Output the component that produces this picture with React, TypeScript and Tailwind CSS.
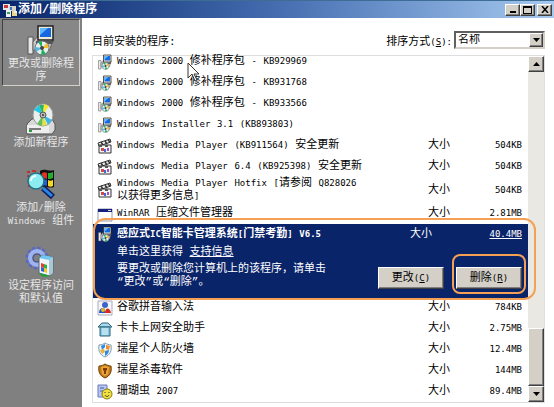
import type { ReactNode } from "react";

const base = "font-['Liberation_Mono','Noto_Sans_CJK_SC',monospace]";
const latin = "font-['DejaVu_Sans_Mono',monospace] text-[9px]";

/* Latin runs are set smaller than the Chinese text so both stay optically even. */
function Mixed({ children }: { children: string }) {
  return (
    <>
      {children.split(/([!-~]+)/).map((part, i) =>
        i % 2 ? (
          <span key={i} className={latin}>{part}</span>
        ) : (
          part
        ),
      )}
    </>
  );
}

function InstallerIcon({ className = "size-4" }: { className?: string }) {
  return (
    <svg viewBox="0 0 32 32" className={`shrink-0 ${className}`} aria-hidden="true">
      <path d="M3 13h5v17H3z" fill="#e8e8e8" stroke="#555" />
      <path d="M8 18l4-5h16l-3 13H8z" fill="#c8c8c8" stroke="#666" />
      <path d="M13 2h15v14H13z" fill="#ece9d8" stroke="#222" strokeWidth="1.5" />
      <path d="M15 4h11v9H15z" fill="#1668e0" />
      <path d="M15 4h8l-8 7z" fill="#62b8ff" />
      <path d="M11 17h18l-2 3H11z" fill="#555" />
      <circle cx="17" cy="24" r="7" fill="#e4efe9" stroke="#667" />
      <path d="M17 24l-4-6 4-1zM17 24l4 6-5 1z" fill="#20b060" />
      <path d="M17 24l5-5 2 5z" fill="#f0c030" />
      <path d="M17 24l-6 4-1-5z" fill="#55b8e8" />
      <circle cx="17" cy="24" r="2" fill="#444" />
    </svg>
  );
}

function TitleIcon() {
  return (
    <svg viewBox="0 0 16 16" className="size-4 shrink-0" aria-hidden="true">
      <path d="M1 2h7v6H1z" fill="#e8e8e8" />
      <path d="M2 3h4v3H2z" fill="#c83838" />
      <path d="M7 4h7v5H7z" fill="#d8d4c8" />
      <path d="M8 5h2v3H8z" fill="#3878d0" />
      <path d="M4 8h5v7H4z" fill="#eee" />
      <path d="M10 9h5v5h-5z" fill="#e8d890" />
      <path d="M5 10h3v2H5z" fill="#39a060" />
      <path d="M12 9h3v2h-3z" fill="#eee" />
    </svg>
  );
}

function DiscIcon() {
  return (
    <svg viewBox="0 0 32 32" className="size-8" aria-hidden="true">
      <path d="M2 21l5-5h20l3 5v6l-3 4H2z" fill="#d9d9d9" stroke="#555" />
      <path d="M2 22h22v8H2z" fill="#eee" />
      <path d="M4 26h12" stroke="#555" strokeWidth="1.5" />
      <path d="M4 28h3" stroke="#22a040" strokeWidth="2" />
      <ellipse cx="18" cy="12" rx="10" ry="11" fill="#e9eeee" stroke="#999" />
      <path d="M18 12L9 7l5-5z" fill="#20c8e8" />
      <path d="M18 12l-4-10h5z" fill="#30b060" />
      <path d="M18 12l1-11 5 2z" fill="#f6e830" />
      <path d="M18 12l9 5-4 5z" fill="#38b8e8" />
      <path d="M18 12l4 10-5 1z" fill="#e8e040" />
      <path d="M18 12l-1 11-5-2z" fill="#60c060" />
      <circle cx="18" cy="12" r="3" fill="#bbb" stroke="#555" />
      <circle cx="18" cy="12" r="1" fill="#333" />
    </svg>
  );
}

function ComponentsIcon() {
  return (
    <svg viewBox="0 0 32 32" className="size-8" aria-hidden="true">
      <path d="M15 3c5-3 9 1 14-1v17c-5 2-9-2-14 1z" fill="#111" />
      <path d="M17 5c2-1 3-1 5 0v6c-2-1-3-1-5 0z" fill="#e83020" />
      <path d="M23 5c2 0 3 0 5-1v6c-2 1-3 1-5 1z" fill="#20b030" />
      <path d="M17 12c2-1 3-1 5 0v6c-2-1-3-1-5 0z" fill="#2060e0" />
      <path d="M23 12c2 1 3 1 5 0v6c-2 1-3 1-5 0z" fill="#f8d820" />
      <path d="M2 4h3M7 3h4M2 8h2M3 12h1M3 18h3" stroke="#c03030" strokeWidth="2" />
      <path d="M18 20l10 9" stroke="#102060" strokeWidth="6" />
      <path d="M18 20l9 8" stroke="#2888e8" strokeWidth="3" />
      <circle cx="11" cy="13" r="8" fill="#8cecf0" stroke="#267080" strokeWidth="1.5" />
      <path d="M6 13c0-3 2-5 5-5" stroke="#e8ffff" strokeWidth="2" fill="none" />
    </svg>
  );
}

function DefaultsIcon() {
  return (
    <svg viewBox="0 0 32 32" className="size-8" aria-hidden="true">
      <circle cx="12" cy="12" r="9" fill="none" stroke="#5a68c0" strokeWidth="5" strokeDasharray="3 1.7" />
      <circle cx="12" cy="12" r="7" fill="none" stroke="#9db4f4" strokeWidth="4" />
      <circle cx="12" cy="12" r="4" fill="#808080" stroke="#4450a0" />
      <path d="M14 12l4-3 10 2v16l-4 3-10-3z" fill="#eef4f8" stroke="#567" />
      <path d="M24 14l4-3v16l-4 3z" fill="#a8c8d8" />
      <path d="M14 12l4-3 10 2-4 3z" fill="#70c8f0" />
      <path d="M16 17l3 1v4l-3-1z" fill="#e84030" />
      <path d="M19 18l3 1v4l-3-1z" fill="#30b040" />
      <path d="M16 21l3 1v4l-3-1z" fill="#3060e0" />
      <path d="M19 22l3 1v4l-3-1z" fill="#f0c820" />
      <path d="M13 27l5 4 8-1-3-1z" fill="#22a038" />
    </svg>
  );
}

function MediaIcon() {
  return (
    <svg viewBox="0 0 16 16" className="size-4 shrink-0" aria-hidden="true">
      <path d="M1 5l12-4 1 3L2 8z" fill="#eee" stroke="#333" />
      <path d="M4 4l2 3M8 3l2 3M11 2l2 2" stroke="#333" strokeWidth="1.5" />
      <path d="M2 7h12v8H2z" fill="#f6f6f6" stroke="#333" />
      <path d="M2 7h3v2H2zM8 7h3v2H8z" fill="#555" />
      <path d="M4 10h3v3H4z" fill="#d04850" />
      <path d="M7 11h2v3H7z" fill="#4068d8" />
      <path d="M10 10h2v3h-2z" fill="#a050c0" />
    </svg>
  );
}

function WindowIcon() {
  return (
    <svg viewBox="0 0 16 16" className="size-4 shrink-0" aria-hidden="true">
      <path d="M1 3h14v12H1z" fill="#fff" stroke="#99a" />
      <path d="M1 3h14v3H1z" fill="#15217c" />
      <path d="M11 4h3v1h-3z" fill="#ddd" />
    </svg>
  );
}

function GoogleIcon() {
  return (
    <svg viewBox="0 0 16 16" className="size-4 shrink-0" aria-hidden="true">
      <path d="M1 1h14v14H1z" fill="#f4f6fa" stroke="#aab" />
      <circle cx="8" cy="5" r="3" fill="#3c64c8" />
      <path d="M2 13c0-5 4-6 6-4v4z" fill="#2454c8" />
      <circle cx="6" cy="10" r="2" fill="#e8b820" />
      <path d="M8 13c0-6 5-6 6 0z" fill="#d82820" />
    </svg>
  );
}

function BinIcon() {
  return (
    <svg viewBox="0 0 16 16" className="size-4 shrink-0" aria-hidden="true">
      <path d="M1 6l4-4h6l4 4z" fill="#a8dcec" stroke="#28637c" />
      <path d="M3 6h10v9H3z" fill="#8cc8e0" stroke="#28637c" />
      <path d="M6 7v7M8 7v7M10 7v7" stroke="#e4f8ff" />
    </svg>
  );
}

function FirewallIcon() {
  return (
    <svg viewBox="0 0 16 16" className="size-4 shrink-0" aria-hidden="true">
      <path d="M2 3c3 0 4-1 6-2 2 1 4 2 6 2 1 6-1 10-6 12C3 13 1 9 2 3z" fill="#eef6fc" stroke="#7c9bb4" />
      <path d="M4 4l4-2v3L5 8z" fill="#3088e0" />
      <path d="M9 3l4 1-1 4-3-1z" fill="#f09028" />
      <path d="M3 8l4-1 1 3-3 2z" fill="#f0b030" />
      <path d="M8 9l4-1c0 3-2 5-4 6z" fill="#3088e0" />
    </svg>
  );
}

function AntivirusIcon() {
  return (
    <svg viewBox="0 0 16 16" className="size-4 shrink-0" aria-hidden="true">
      <path d="M2 3c3 0 4-1 6-2 2 1 4 2 6 2 1 6-1 10-6 12C3 13 1 9 2 3z" fill="#c47a18" stroke="#704008" />
      <path d="M4 4l4-1 4 1-1 7-3 2-3-2z" fill="#e8a838" />
      <path d="M6 5h4v2L9 8v3H7V8L6 7z" fill="#803c08" />
    </svg>
  );
}

function MessengerIcon() {
  return (
    <svg viewBox="0 0 16 16" className="size-4 shrink-0" aria-hidden="true">
      <path d="M1 1h9v12H1z" fill="#b8c8f0" stroke="#6878b8" />
      <path d="M3 4h4M3 7h3" stroke="#4058a8" />
      <circle cx="10" cy="10" r="5" fill="#f0e040" stroke="#888010" />
      <path d="M8 8v1M12 8v1" stroke="#333" />
      <path d="M8 11c1 2 3 2 4 0" stroke="#333" fill="none" />
    </svg>
  );
}

type Program = { name: string; size?: string; icon: ReactNode; tall?: boolean };

const before: Program[] = [
  { name: "Windows 2000 修补程序包 - KB929969", icon: <InstallerIcon /> },
  { name: "Windows 2000 修补程序包 - KB931768", icon: <InstallerIcon /> },
  { name: "Windows 2000 修补程序包 - KB933566", icon: <InstallerIcon /> },
  { name: "Windows Installer 3.1 (KB893803)", icon: <InstallerIcon /> },
  { name: "Windows Media Player (KB911564) 安全更新", size: "504KB", icon: <MediaIcon /> },
  { name: "Windows Media Player 6.4 (KB925398) 安全更新", size: "504KB", icon: <MediaIcon /> },
  { name: "Windows Media Player Hotfix [请参阅 Q828026 以获得更多信息]", size: "504KB", icon: <MediaIcon />, tall: true },
  { name: "WinRAR 压缩文件管理器", size: "2.81MB", icon: <WindowIcon /> },
];

const after: Program[] = [
  { name: "谷歌拼音输入法", size: "784KB", icon: <GoogleIcon /> },
  { name: "卡卡上网安全助手", size: "2.75MB", icon: <BinIcon /> },
  { name: "瑞星个人防火墙", size: "12.4MB", icon: <FirewallIcon /> },
  { name: "瑞星杀毒软件", size: "144MB", icon: <AntivirusIcon /> },
  { name: "珊瑚虫 2007", size: "89.4MB", icon: <MessengerIcon /> },
];

function ProgramRow({ program }: { program: Program }) {
  return (
    <li className={`flex items-center pr-1.5 pl-1 ${program.tall ? "h-[26px]" : "h-[21px]"}`}>
      {program.icon}
      <div className="ml-1 min-w-0 flex-1 leading-[13px]">
        <div className="max-w-[250px]"><Mixed>{program.name}</Mixed></div>
      </div>
      {program.size && (
        <>
          <span className="w-[30px]">大小</span>
          <span className="w-16 text-right"><Mixed>{program.size}</Mixed></span>
        </>
      )}
    </li>
  );
}

const raised =
  "border border-t-white border-l-white border-r-[#404040] border-b-[#404040] bg-[#d4d0c8] shadow-[inset_-1px_-1px_0_#808080]";

function Arrow({ up = false }: { up?: boolean }) {
  return (
    <svg viewBox="0 0 7 4" className="h-1 w-[7px]" aria-hidden="true">
      <path d={up ? "M0 4l3.500-4L7 4z" : "M0 0h7L3.500 4z"} fill="#000" />
    </svg>
  );
}

function NavButton({ icon, lines, active = false }: { icon: ReactNode; lines: string[]; active?: boolean }) {
  return (
    <button
      className={`flex w-full flex-col items-center border text-[11px] leading-[13px] text-[#e6e6e6] ${
        active
          ? "h-[67px] border-t-[#404040] border-l-[#404040] border-r-[#d4d0c8] border-b-[#d4d0c8] bg-[#878787] pt-1"
          : "border-transparent"
      }`}
    >
      {icon}
      <span className="mt-0.5 flex flex-col">
        {lines.map((line) => (
          <span key={line}><Mixed>{line}</Mixed></span>
        ))}
      </span>
    </button>
  );
}

export default function App() {
  return (
    <div className={`flex min-h-screen flex-col bg-white text-[11px] text-black ${base}`}>
      <header className="flex h-[18px] items-center border-t border-[#3d6c94] bg-linear-to-r from-[#0a246a] via-[#456db0] via-50% to-[#a6caf0] pr-0.5 pl-0.5">
        <TitleIcon />
        <h1 className="flex-1 text-xs leading-4 font-bold text-white">添加/删除程序</h1>
        <button aria-label="最小化" className={`flex h-3 w-[15px] items-end justify-center pb-0.5 ${raised}`}>
          <span className="h-0.5 w-1.5 bg-black" />
        </button>
        <button aria-label="最大化" className={`flex h-3 w-[15px] items-center justify-center ${raised}`}>
          <span className="h-2 w-[9px] border border-t-2 border-black" />
        </button>
        <button aria-label="关闭" className={`ml-0.5 flex h-3 w-[15px] items-center justify-center ${raised}`}>
          <svg viewBox="0 0 8 7" className="h-[7px] w-2" aria-hidden="true">
            <path d="M1 0l6 7M7 0L1 7" stroke="#000" strokeWidth="1.5" />
          </svg>
        </button>
      </header>

      <div className="flex flex-1">
        <nav className="flex w-[82px] shrink-0 flex-col gap-4 bg-[#808080] px-0.5 pt-px">
          <NavButton active icon={<InstallerIcon className="size-8" />} lines={["更改或删除程", "序"]} />
          <NavButton icon={<DiscIcon />} lines={["添加新程序"]} />
          <NavButton icon={<ComponentsIcon />} lines={["添加/删除", "Windows 组件"]} />
          <NavButton icon={<DefaultsIcon />} lines={["设定程序访问", "和默认值"]} />
        </nav>

        <main className="min-w-0 flex-1 pt-[13px] pr-[9px] pb-1 pl-2.5">
          <div className="flex h-[18px] items-center">
            <h2 className="mt-1 flex-1">目前安装的程序:</h2>
            <label htmlFor="sort" className="mt-1 mr-0.5">
              排序方式<span className={latin}>(<u>S</u>):</span>
            </label>
            <div className="grid h-[18px] w-[91px]">
              <select
                id="sort"
                className="col-start-1 row-start-1 appearance-none border-2 border-t-[#606060] border-l-[#606060] border-r-[#d4d0c8] border-b-[#d4d0c8] bg-white pl-0.5 leading-[13px]"
              >
                <option>名称</option>
              </select>
              <span className={`pointer-events-none col-start-1 row-start-1 m-0.5 flex w-[14px] items-center justify-center justify-self-end ${raised}`}>
                <Arrow />
              </span>
            </div>
          </div>

          <div className="mt-1.5 flex border border-[#dedede]">
            <div className="min-w-0 flex-1">
              <ul className="-mt-[5px]">
                {before.map((p) => <ProgramRow key={p.name} program={p} />)}
              </ul>
              <section className="relative h-[74px] bg-[#0a246a] pt-0.5 pr-1.5 pl-1 text-white">
                <div className="flex h-4 items-center">
                  <InstallerIcon />
                  <h3 className="ml-1 flex-1 font-bold">感应式<Mixed>IC</Mixed>智能卡管理系统<Mixed>[</Mixed>门禁考勤<Mixed>] V6.5</Mixed></h3>
                  <span className="w-12">大小</span>
                  <a href="#size" className="w-16 text-right underline"><Mixed>40.4MB</Mixed></a>
                </div>
                <p className="mt-1 ml-5 leading-[13px]">
                  单击这里获得 <a href="#support" className="underline">支持信息</a>
                </p>
                <div className="ml-5 flex items-start">
                  <p className="mt-1 flex-1 leading-[13px]">
                    要更改或删除您计算机上的该程序，请单击
                    <br />
                    “更改”或“删除”。
                  </p>
                  <button className={`mt-2 h-[22px] w-[66px] text-black ${raised}`}>更改<span className={latin}>(<u>C</u>)</span></button>
                  <button className={`mt-2 ml-3 h-[22px] w-[66px] text-black ${raised}`}>删除<span className={latin}>(<u>R</u>)</span></button>
                </div>
                <div className="pointer-events-none absolute -top-1.5 -right-2 -bottom-0.5 left-0 rounded-xl border-2 border-[#f5a052]" />
                <div className="pointer-events-none absolute right-0.5 bottom-1 h-10 w-[74px] rounded-lg border-2 border-[#f5a052]" />
              </section>
              <ul className="-mt-px">
                {after.map((p) => <ProgramRow key={p.name} program={p} />)}
              </ul>
            </div>
            <div className="flex w-4 flex-col bg-[#eae8e2]">
              <button aria-label="向上滚动" className={`flex h-4 items-center justify-center ${raised}`}><Arrow up /></button>
              <div className="flex-1" />
              <div className={`h-[58px] ${raised}`} />
              <button aria-label="向下滚动" className={`flex h-4 items-center justify-center ${raised}`}><Arrow /></button>
            </div>
          </div>
        </main>
      </div>

      <svg viewBox="0 0 12 20" className="pointer-events-none absolute top-[62px] left-[187px] h-5 w-3" aria-hidden="true">
        <path d="M1 1v15l4-4 3 7 2-1-3-6h5z" fill="#fff" stroke="#333" />
      </svg>
    </div>
  );
}
